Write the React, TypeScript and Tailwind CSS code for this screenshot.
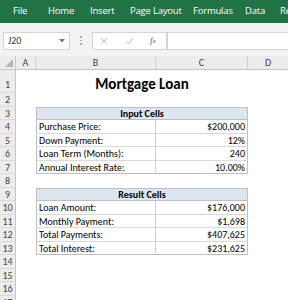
import React from 'react';

const font = { fontFamily: 'Carlito, Lato, "Liberation Sans", sans-serif' };

// tab label + the slot it takes in the ribbon
const tabs: [string, string][] = [
  ['File', 'w-[35px]'],
  ['Home', 'w-[42px]'],
  ['Insert', 'w-[40px]'],
  ['Page Layout', 'w-[63px]'],
  ['Formulas', 'w-[52px]'],
  ['Data', 'w-[35px]'],
  ['Review', 'w-[40px]'],
];

// row heights in px, alternating to land on the grid in the picture
const heights: Record<number, number> = {
  1: 23, 2: 14, 3: 13, 4: 14, 5: 13, 6: 14, 7: 13, 8: 14, 9: 13,
  10: 14, 11: 13, 12: 14, 13: 13, 14: 14, 15: 13, 16: 14, 17: 13,
};

function RowHead({ n, bottom }: { n: number; bottom?: boolean }) {
  return (
    <div
      className={`w-[16px] shrink-0 flex justify-center border-r border-b border-r-[#c6c6c6] border-b-[#dadada] bg-[#ececec] text-[10px] text-[#444] leading-none ${bottom ? 'items-end pb-[2px]' : 'items-center pt-[1px]'}`}
    >
      {n}
    </div>
  );
}

function Row({ n, children, bottom }: { n: number; children?: React.ReactNode; bottom?: boolean }) {
  return (
    <div className="flex" style={{ height: heights[n] }}>
      <RowHead n={n} bottom={bottom} />
      <div className="w-[20px] shrink-0" />
      {children}
    </div>
  );
}

function HeadRow({ n, label }: { n: number; label: string }) {
  return (
    <Row n={n}>
      <div className="w-[212px] shrink-0 flex items-center justify-center border border-[#bfbfbf] bg-[#dce6f1] text-[10px] font-bold text-black">
        {label}
      </div>
    </Row>
  );
}

function DataRow({ n, label, value, last }: { n: number; label: string; value: string; last?: boolean }) {
  const line = last ? 'border-b border-b-[#bfbfbf]' : 'border-b border-b-[#d9d9d9]';
  return (
    <Row n={n}>
      <div className={`w-[120px] shrink-0 flex items-center pl-[2px] border-l border-r border-l-[#bfbfbf] border-r-[#d0d0d0] text-[10px] text-black ${line}`}>
        {label}
      </div>
      <div className={`w-[92px] shrink-0 flex items-center justify-end pr-[2px] border-r border-r-[#bfbfbf] text-[10px] text-black ${line}`}>
        {value}
      </div>
    </Row>
  );
}

export default function App() {
  return (
    <div className="w-[288px] h-[300px] overflow-hidden bg-white" style={font}>
      {/* ribbon tabs */}
      <div className="h-[23px] bg-[#217346] flex items-center pl-[13px] text-white text-[9.5px] whitespace-nowrap overflow-hidden" style={{ fontFamily: '"Open Sans", sans-serif' }}>
        {tabs.map(([t, w]) => (
          <span key={t} className={`${w} shrink-0 tracking-[-0.2px]`}>{t}</span>
        ))}
      </div>

      {/* formula bar */}
      <div className="h-[33px] bg-[#f3f3f3] flex items-center pl-[3px] pt-[2px]">
        <div className="w-[67px] h-[18px] bg-white border border-[#d4d4d4] flex items-center justify-between px-[4px] text-[10px] text-[#333]">
          <span>J20</span>
          <svg width="6" height="4" viewBox="0 0 6 4"><path d="M0 0h6L3 3.5z" fill="#777" /></svg>
        </div>
        <div className="w-[22px] flex flex-col items-center gap-[2px]">
          <span className="w-[1.5px] h-[1.5px] bg-[#aaa]" />
          <span className="w-[1.5px] h-[1.5px] bg-[#aaa]" />
          <span className="w-[1.5px] h-[1.5px] bg-[#aaa]" />
        </div>
        <div className="w-[75px] h-[18px] bg-white border border-[#d4d4d4] flex items-center">
          <svg className="ml-[7px]" width="8" height="8" viewBox="0 0 8 8"><path d="M1 1l6 6M7 1L1 7" stroke="#bdbdbd" strokeWidth="1" /></svg>
          <svg className="ml-[17px]" width="9" height="8" viewBox="0 0 9 8"><path d="M1 4.5l2.5 2.5L8 1" stroke="#bdbdbd" strokeWidth="1" fill="none" /></svg>
          <span className="ml-[16px] text-[9px] italic text-[#555]" style={{ fontFamily: '"Liberation Serif", serif' }}>f<span className="text-[7px]">x</span></span>
        </div>
        <div className="flex-1 h-[18px] bg-white border border-[#d4d4d4] border-r-0" />
      </div>

      {/* column headers */}
      <div className="h-[14px] flex bg-[#ececec] border-b border-[#c6c6c6] text-[10px] text-[#444]">
        <div className="w-[16px] shrink-0 border-r border-[#c6c6c6] flex items-end justify-end p-[2px]">
          <svg width="8" height="8" viewBox="0 0 8 8"><path d="M8 0v8H0z" fill="#b4b4b4" /></svg>
        </div>
        <div className="w-[20px] shrink-0 border-r border-[#d0d0d0] flex items-center justify-center">A</div>
        <div className="w-[120px] shrink-0 border-r border-[#d0d0d0] flex items-center justify-center">B</div>
        <div className="w-[92px] shrink-0 border-r border-[#d0d0d0] flex items-center justify-center">C</div>
        <div className="w-[40px] shrink-0 flex items-center justify-center">D</div>
      </div>

      {/* sheet */}
      <Row n={1} bottom>
        <div className="w-[212px] shrink-0 flex items-end justify-center pb-[1px] text-[15px] font-bold text-black leading-none">
          Mortgage Loan
        </div>
      </Row>
      <Row n={2} />
      <HeadRow n={3} label="Input Cells" />
      <DataRow n={4} label="Purchase Price:" value="$200,000" />
      <DataRow n={5} label="Down Payment:" value="12%" />
      <DataRow n={6} label="Loan Term (Months):" value="240" />
      <DataRow n={7} label="Annual Interest Rate:" value="10.00%" last />
      <Row n={8} />
      <HeadRow n={9} label="Result Cells" />
      <DataRow n={10} label="Loan Amount:" value="$176,000" />
      <DataRow n={11} label="Monthly Payment:" value="$1,698" />
      <DataRow n={12} label="Total Payments:" value="$407,625" />
      <DataRow n={13} label="Total Interest:" value="$231,625" last />
      <Row n={14} />
      <Row n={15} />
      <Row n={16} />
      <Row n={17} />
    </div>
  );
}
